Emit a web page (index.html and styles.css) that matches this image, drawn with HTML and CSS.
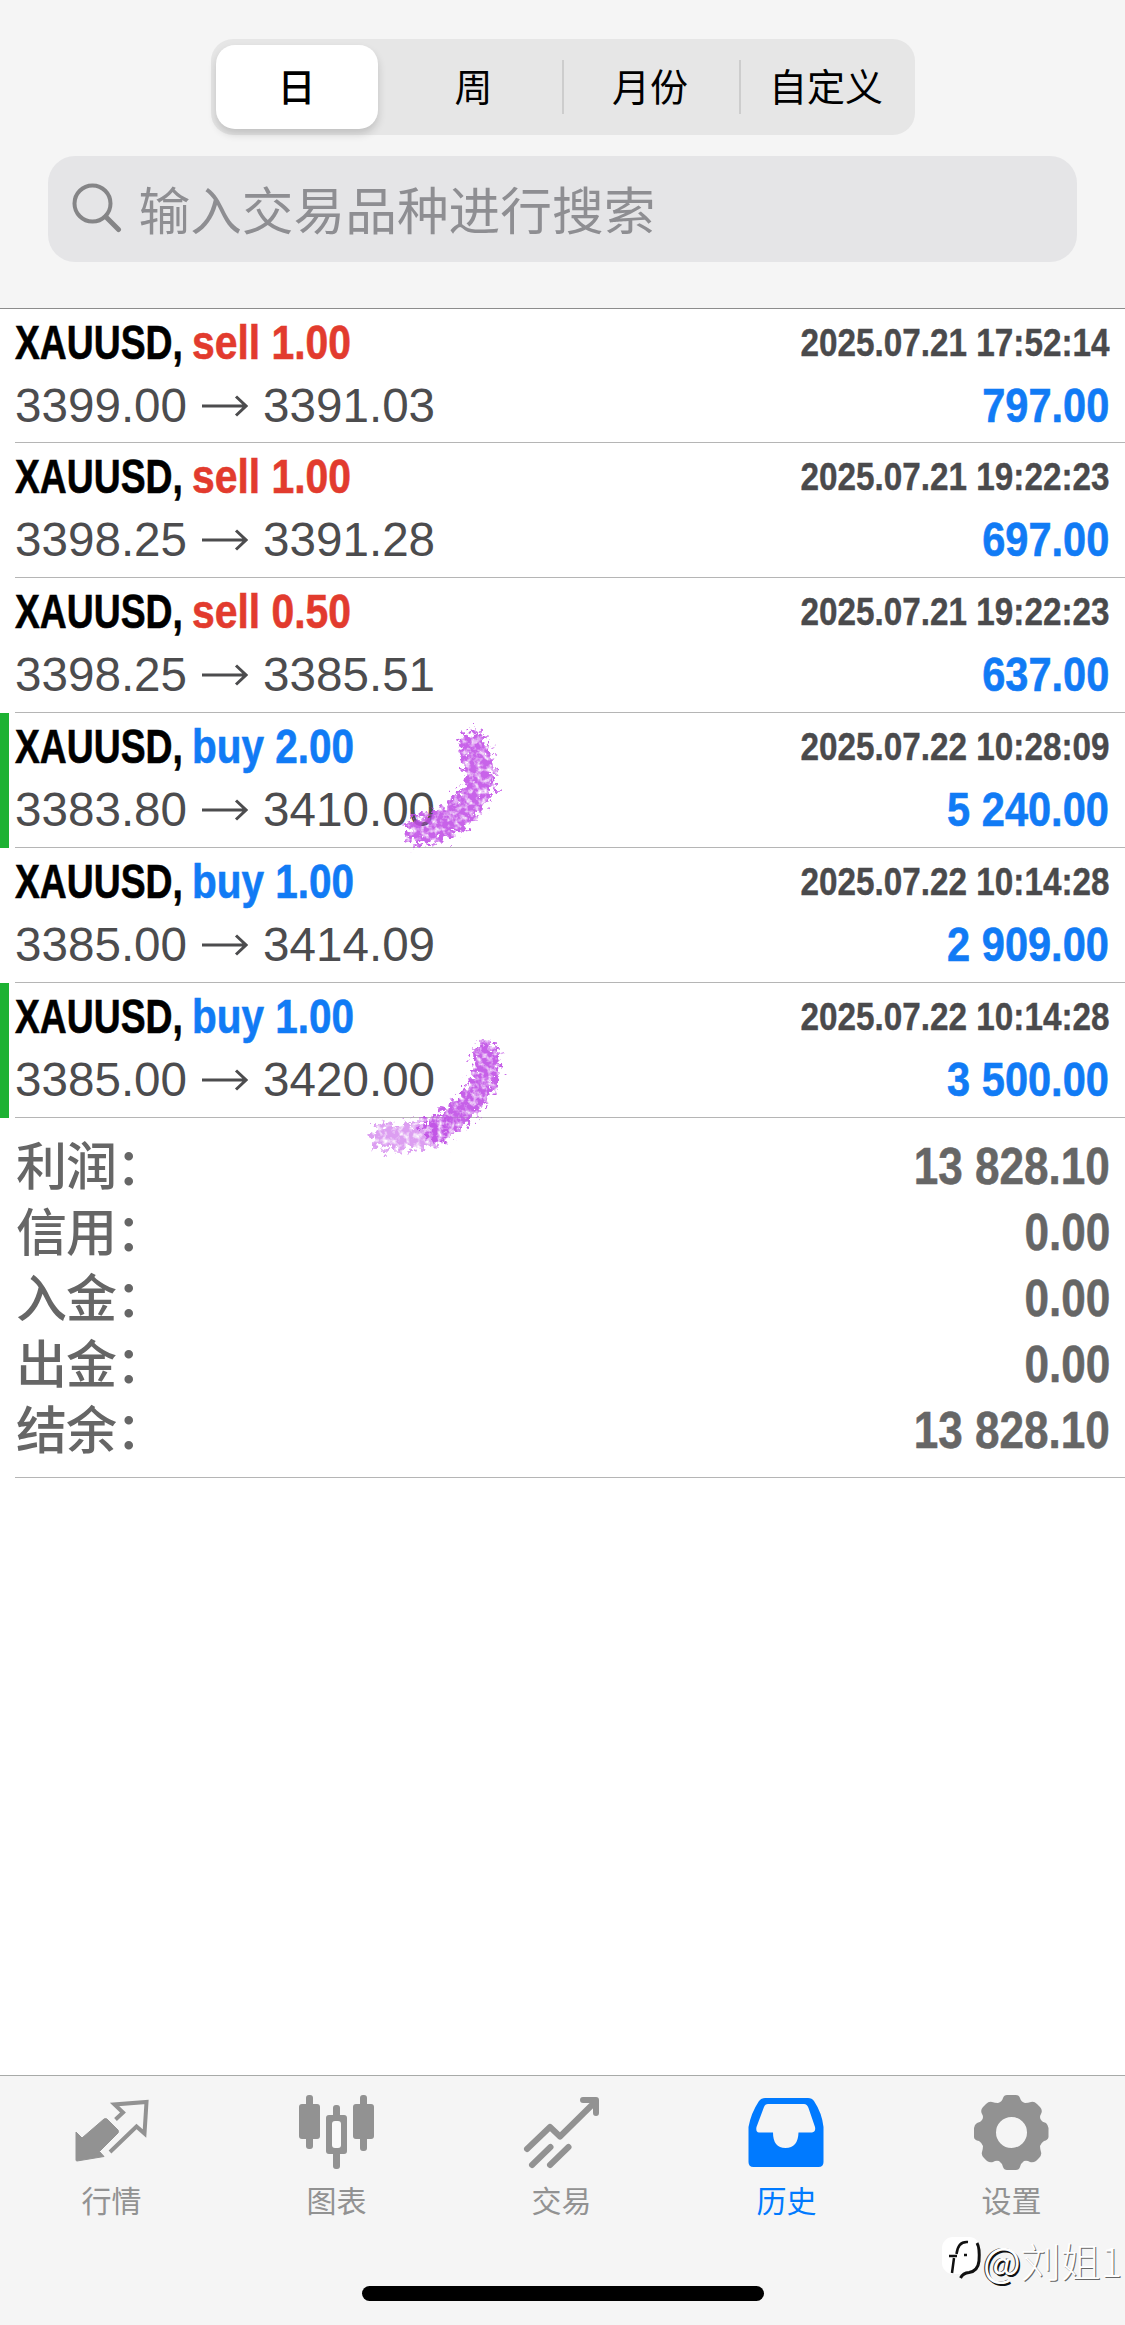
FILE: index.html
```html
<!DOCTYPE html>
<html lang="zh-CN">
<head>
<meta charset="utf-8">
<title>历史</title>
<link rel="stylesheet" href="styles.css">
</head>
<body>
<div class="app">
  <header class="header">
    <nav class="segments">
      <button class="segment segment-active">日</button>
      <button class="segment segment-week">周</button>
      <button class="segment segment-ruled">月份</button>
      <button class="segment segment-ruled">自定义</button>
    </nav>
    <div class="search">
      <svg class="search-icon" width="50" height="50" viewBox="0 0 50 50"><circle cx="20.500" cy="20.500" r="18" fill="none" stroke="#858587" stroke-width="4"/><path d="M34 34L46.500 46.500" stroke="#858587" stroke-width="5" stroke-linecap="round"/></svg>
      <span class="placeholder">输入交易品种进行搜索</span>
    </div>
  </header>

  <main class="history">
    <article class="deal">
      <div class="line"><span class="symbol">XAUUSD,</span><span class="side sell">sell 1.00</span><time class="time">2025.07.21 17:52:14</time></div>
      <div class="line"><span class="price">3399.00</span><svg class="arrow" viewBox="0 0 46 22"><path d="M0 11H44M34 1.500L44 11L34 20.500"/></svg><span class="price">3391.03</span><span class="profit">797.00</span></div>
    </article>
    <article class="deal">
      <div class="line"><span class="symbol">XAUUSD,</span><span class="side sell">sell 1.00</span><time class="time">2025.07.21 19:22:23</time></div>
      <div class="line"><span class="price">3398.25</span><svg class="arrow" viewBox="0 0 46 22"><path d="M0 11H44M34 1.500L44 11L34 20.500"/></svg><span class="price">3391.28</span><span class="profit">697.00</span></div>
    </article>
    <article class="deal">
      <div class="line"><span class="symbol">XAUUSD,</span><span class="side sell">sell 0.50</span><time class="time">2025.07.21 19:22:23</time></div>
      <div class="line"><span class="price">3398.25</span><svg class="arrow" viewBox="0 0 46 22"><path d="M0 11H44M34 1.500L44 11L34 20.500"/></svg><span class="price">3385.51</span><span class="profit">637.00</span></div>
    </article>
    <article class="deal deal-tp">
      <div class="line"><span class="symbol">XAUUSD,</span><span class="side buy">buy 2.00</span><time class="time">2025.07.22 10:28:09</time></div>
      <div class="line"><span class="price">3383.80</span><svg class="arrow" viewBox="0 0 46 22"><path d="M0 11H44M34 1.500L44 11L34 20.500"/></svg><span class="price">3410.00</span><span class="profit">5 240.00</span></div>
    </article>
    <article class="deal">
      <div class="line"><span class="symbol">XAUUSD,</span><span class="side buy">buy 1.00</span><time class="time">2025.07.22 10:14:28</time></div>
      <div class="line"><span class="price">3385.00</span><svg class="arrow" viewBox="0 0 46 22"><path d="M0 11H44M34 1.500L44 11L34 20.500"/></svg><span class="price">3414.09</span><span class="profit">2 909.00</span></div>
    </article>
    <article class="deal deal-tp">
      <div class="line"><span class="symbol">XAUUSD,</span><span class="side buy">buy 1.00</span><time class="time">2025.07.22 10:14:28</time></div>
      <div class="line"><span class="price">3385.00</span><svg class="arrow" viewBox="0 0 46 22"><path d="M0 11H44M34 1.500L44 11L34 20.500"/></svg><span class="price">3420.00</span><span class="profit">3 500.00</span></div>
    </article>
    <dl class="totals">
      <div class="total"><dt>利润：</dt><dd>13 828.10</dd></div>
      <div class="total"><dt>信用：</dt><dd>0.00</dd></div>
      <div class="total"><dt>入金：</dt><dd>0.00</dd></div>
      <div class="total"><dt>出金：</dt><dd>0.00</dd></div>
      <div class="total"><dt>结余：</dt><dd>13 828.10</dd></div>
    </dl>
  </main>

  <footer class="tabbar">
    <nav class="tabs">
      <a class="tab">
        <svg class="tab-icon" viewBox="3 0 80 80"><path d="M35 26Q36.500 25 38 26L49 37Q50 38.500 49 40L30.500 58.500L35 63.500L8 68Q7 68 7 67V39L13 45Z" fill="#929292" stroke="#929292" stroke-linejoin="round"/><path d="M46.500 26.500L54 19.500L45.500 11.500L77.500 9L75.500 40.500L67.500 33.500L41 59" fill="none" stroke="#929292" stroke-width="4"/></svg>
        <span>行情</span>
      </a>
      <a class="tab">
        <svg class="tab-icon" viewBox="0 0 80 80" fill="#929292"><rect x="9" y="2" width="7" height="54" rx="3"/><rect x="2" y="11" width="21" height="35" rx="3"/><rect x="36" y="12" width="7" height="64" rx="3"/><rect x="29" y="22" width="21" height="39" rx="3"/><rect x="35" y="28" width="9" height="27" rx="3" fill="#fafafa"/><rect x="63" y="2" width="7" height="56" rx="3"/><rect x="56" y="11" width="21" height="35" rx="3"/></svg>
        <span>图表</span>
      </a>
      <a class="tab">
        <svg class="tab-icon" viewBox="0 0 80 80" fill="none" stroke="#929292" stroke-width="6" stroke-linecap="round" stroke-linejoin="round"><path d="M5 56L28 34L38 43.500L73 9M61 7H74V20M10 72L28.500 54M28 72L46.500 54"/></svg>
        <span>交易</span>
      </a>
      <a class="tab tab-active">
        <svg class="tab-icon" viewBox="0 0 80 80"><path fill-rule="evenodd" d="M18 5H61Q65 5 67 8Q75 20 76.500 34V69Q76.500 74 71.500 74H6.500Q1.500 74 1.500 69V34Q4 20 12 8Q14 5 18 5ZM21 11Q18 11 17 14L9.500 34Q8.500 39 12 39.500H26Q26 55 38.500 55Q51 55 51.500 39.500H65Q69 39 68 34L61.500 15Q60 11 57 11Z" fill="#007aff"/></svg>
        <span>历史</span>
      </a>
      <a class="tab">
        <svg class="tab-icon" viewBox="0 0 80 80"><path fill-rule="evenodd" d="M35 2H44Q47 2 48 5Q49 9 53 10Q56 10 59 9Q62 8 65 11L68 14Q71 17 69 21Q67 24 69 27Q70 29 74 30Q76 32 76.500 35V44Q76 47 72 48Q69 50 68 53Q68 55 69 59Q70 62 67 65L64 68Q61 70 58 69Q55 67 52 68Q49 70 48 74Q47 77 44 77H35Q32 77 31 74Q30 70 27 68Q24 67 21 69Q18 70 15 68L12 65Q9 62 10 59Q11 55 11 53Q10 50 7 48Q2 47 2 44V35Q2 32 5 30Q9 29 10 27Q12 24 10 21Q8 17 11 14L14 11Q17 8 20 9Q23 10 26 10Q30 9 31 5Q32 2 35 2ZM39.500 24A15.500 15.500 0 1 0 39.500 55A15.500 15.500 0 1 0 39.500 24Z" fill="#929292"/></svg>
        <span>设置</span>
      </a>
    </nav>
    <div class="home-indicator"></div>
  </footer>

  <svg class="marker" viewBox="0 0 180 480">
    <defs>
      <filter id="chalk" x="-20%" y="-20%" width="140%" height="140%">
        <feTurbulence type="fractalNoise" baseFrequency="0.180" numOctaves="3" seed="4" result="n"/>
        <feDisplacementMap in="SourceGraphic" in2="n" scale="26" xChannelSelector="R" yChannelSelector="G" result="d"/>
        <feColorMatrix in="n" type="matrix" values="0 0 0 0 0  0 0 0 0 0  0 0 0 0 0  0 0 2.400 0 -0.350" result="m"/>
        <feComposite in="d" in2="m" operator="in"/>
        <feGaussianBlur stdDeviation="0.700"/>
      </filter>
    </defs>
    <g filter="url(#chalk)" fill="none" stroke="#c04fe6" stroke-linecap="round" stroke-linejoin="round">
      <path d="M113 45Q126 78 115 95Q96 125 60 130" stroke-width="29" opacity=".88"/>
      <path d="M126 354Q129 378 115 396Q99 419 74 429" stroke-width="26" opacity=".9"/>
      <path d="M78 430Q56 439 24 437" stroke-width="27" opacity=".55"/>
    </g>
  </svg>

  <div class="watermark">
    <svg class="watermark-logo" width="42" height="46" viewBox="0 0 42 46"><rect x="1" y="1" width="38" height="37" rx="11" fill="#fff"/><path d="M27 6Q17 5 15.500 18M8 20H16M13 22L11 37M23 19H26" fill="none" stroke="#111" stroke-width="2.500"/><path d="M36 7Q39 12 38 25Q37 35 28 36.500Q22 37 19.500 42" fill="none" stroke="#111" stroke-width="3"/></svg>
    <span class="watermark-at">@</span><span>刘姐1</span>
  </div>
</div>
</body>
</html>
```
FILE: styles.css
```css
* { box-sizing: border-box; }

body {
  margin: 0;
  background: #fff;
  font-family: "Liberation Sans", "Noto Sans CJK SC", sans-serif;
}

.app {
  position: relative;
  display: flex;
  flex-direction: column;
  width: 1125px;
  height: 2325px;
  overflow: hidden;
}

.header {
  display: flex;
  flex-direction: column;
  align-items: center;
  gap: 21px;
  height: 309px;
  padding-top: 39px;
  background: #f5f5f5;
  border-bottom: 1px solid #8c8c8c;
}

.segments {
  display: grid;
  grid-template-columns: 162px 184px 177px 175px;
  width: 704px;
  height: 96px;
  padding: 6px 0 6px 5px;
  border-radius: 22px;
  background: #e6e6e6;
}

.segment {
  display: flex;
  align-items: center;
  justify-content: center;
  height: 84px;
  padding: 0 0 5px;
  border: 0;
  background: none;
  color: #000;
  font: 400 38px "Noto Sans CJK SC", sans-serif;
}

.segment-active {
  border-radius: 19px;
  background: #fff;
  box-shadow: 0 5px 8px rgba(0, 0, 0, .16);
  font-weight: 500;
}

.segment-week { padding-left: 8px; }

.segment-ruled {
  background: linear-gradient(#cdcdcd, #cdcdcd) 0 50% / 2px 54px no-repeat;
}

.search {
  display: flex;
  align-items: center;
  width: 1029px;
  height: 106px;
  margin-right: 1px;
  padding-left: 24px;
  border-radius: 27px;
  background: #e5e5e7;
}

.search-icon { flex: none; margin-top: -3px; }

.placeholder {
  margin: -3px 0 0 17px;
  color: #8e8e92;
  font: 400 51.700px/1 "Noto Sans CJK SC", sans-serif;
}

.history { margin-top: -1px; padding-top: 1px; }

.deal {
  position: relative;
  height: 135px;
  padding: 2px 16px 0 15px;
}

.deal:first-child { height: 134px; }

.deal::after,
.totals::after {
  content: "";
  position: absolute;
  right: 0;
  bottom: 0;
  left: 15px;
  height: 1px;
  background: #b5b5b5;
}

.deal-tp { box-shadow: inset 9px 0 #1db233; }

.line {
  display: flex;
  align-items: center;
  height: 63px;
  white-space: nowrap;
}

.symbol,
.side,
.profit {
  font-size: 47.500px;
  font-weight: 700;
  -webkit-text-stroke: .6px currentColor;
  transform-origin: left center;
}

.symbol { width: 177px; transform: scaleX(.785); }
.side { transform: scaleX(.86); }
.sell { color: #e23b2e; }
.buy { color: #117bf5; transform: scaleX(.853); }

.time {
  margin-left: auto;
  color: #4a4a4c;
  font-size: 38.500px;
  font-weight: 700;
  -webkit-text-stroke: .4px currentColor;
  transform: scaleX(.864);
  transform-origin: right center;
}

.price { color: #4c4c4e; font-size: 47.600px; }

.arrow {
  width: 46px;
  height: 22px;
  margin: 0 15px 0 15px;
  fill: none;
  stroke: #4c4c4e;
  stroke-width: 3;
}

.profit {
  margin-left: auto;
  color: #117bf5;
  transform: scaleX(.875);
  transform-origin: right center;
}

.totals {
  position: relative;
  height: 360px;
  margin: 0;
  padding: 16px 15px 0 16px;
}

.total {
  display: flex;
  align-items: flex-start;
  justify-content: space-between;
  height: 66px;
  color: #666;
}

.total dt {
  margin-top: -4px;
  font: 500 51px/66px "Noto Sans CJK SC", sans-serif;
  letter-spacing: -1px;
}

.total dd {
  margin: 0;
  font-size: 51px;
  font-weight: 700;
  line-height: 65px;
  -webkit-text-stroke: .5px currentColor;
  transform: scaleX(.865);
  transform-origin: right center;
}

.tabbar {
  display: flex;
  flex-direction: column;
  align-items: center;
  height: 250px;
  margin-top: auto;
  border-top: 1px solid #a8aaa8;
  background: #f5f5f5;
}

.tabs {
  display: grid;
  grid-template-columns: repeat(5, 225px);
  height: 210px;
  margin-right: 2px;
}

.tab {
  display: flex;
  flex-direction: column;
  align-items: center;
  padding-top: 17px;
  color: #929292;
  font: 400 30px/44px "Noto Sans CJK SC", sans-serif;
}

.tab-active { color: #007aff; }
.tab-icon { width: 80px; height: 80px; margin-bottom: 4px; }

.home-indicator {
  width: 402px;
  height: 15px;
  border-radius: 8px;
  background: #000;
}

.marker {
  position: absolute;
  top: 700px;
  left: 360px;
  width: 180px;
  height: 480px;
}

.watermark {
  position: absolute;
  top: 2235px;
  left: 941px;
  display: flex;
  align-items: center;
  color: #fff;
  font: 300 40px/50px "Noto Sans CJK SC", sans-serif;
  text-shadow: 1px 1px 0 #666;
  white-space: nowrap;
}

.watermark-logo { margin-top: -2px; }

.watermark-at {
  font-weight: 400;
  text-shadow: 1.500px 1.500px 0 #111, -1px 0 0 #333;
}
```
